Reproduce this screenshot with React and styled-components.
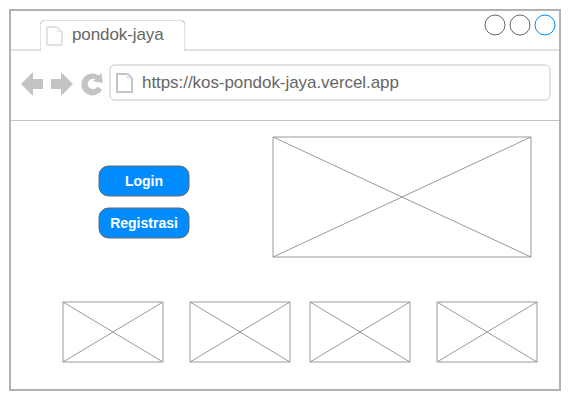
import React from "react";
import styled, { createGlobalStyle } from "styled-components";

const GlobalStyle = createGlobalStyle`
  * { box-sizing: border-box; }
  body {
    margin: 0;
    background: #fff;
    font-family: "Liberation Sans", Arial, Helvetica, sans-serif;
  }
`;

const Page = styled.div`
  width: 571px;
  height: 401px;
  padding: 9px;
  overflow: hidden;
`;

const BrowserWindow = styled.div`
  width: 552px;
  height: 382px;
  border: 2px solid #b2b2b2;
  display: flex;
  flex-direction: column;
`;

const TabStrip = styled.div`
  display: flex;
  height: 40px;
`;

const StripLine = styled.div`
  width: 30px;
  flex: none;
  border-bottom: 2px solid #e1e1e1;
`;

const outline = `
  content: "";
  position: absolute;
  inset: 0 1px 1px 0;
  border: 1px solid #c4c4c4;
  transform: translate(0.5px, 0.5px);
`;

const Tab = styled.div`
  position: relative;
  width: 147px;
  height: 32px;
  margin: 8px 0 0 -2px;
  padding: 7px 0 0 7px;
  display: flex;
  align-items: flex-start;

  &::before {
    ${outline}
    border-bottom: 0;
    border-radius: 6px 6px 0 0;
  }
`;

const Label = styled.span`
  font-size: 17px;
  line-height: 20px;
  white-space: nowrap;
  color: #666;
`;

const TabLabel = styled(Label)`
  margin: -1px 0 0 8px;
  letter-spacing: -0.1px;
`;

const Controls = styled.div`
  display: flex;
  justify-content: flex-end;
  gap: 3px;
  padding: 3px 3px 0 0;
  margin-left: -2px;
  flex: 1;
  border-bottom: 2px solid #e1e1e1;
`;

const Control = styled.svg`
  display: block;
  width: 22px;
  height: 22px;
  fill: #fff;
  stroke: ${(p) => p.$color};
`;

const Toolbar = styled.div`
  display: flex;
  height: 70px;
  padding: 13px 8px 0 9px;
  border-bottom: 1px solid #c4c4c4;
`;

const NavIcons = styled.svg`
  display: block;
  width: 84px;
  height: 26px;
  margin: 7px 5px 0 0;
  fill: #c4c4c4;
`;

const AddressBar = styled.div`
  position: relative;
  width: 442px;
  height: 37px;
  display: flex;
  padding: 9px 0 0 7px;

  &::before {
    ${outline}
    border-radius: 5px;
  }
`;

const AddressLabel = styled(Label)`
  margin-left: 8px;
  letter-spacing: -0.06px;
`;

const FileIcon = styled.svg`
  display: block;
  flex: none;
  width: 18px;
  height: 20px;
  fill: none;
`;

const Hero = styled.div`
  display: flex;
  padding: 15px 0 0 87px;
`;

const Actions = styled.div`
  display: flex;
  flex-direction: column;
  gap: 10px;
  padding-top: 29px;
  width: 174px;
`;

const Button = styled.button`
  position: relative;
  width: 92px;
  height: 32px;
  padding: 0;
  border: 0;
  background: none;
  font: bold 14px/32px "Liberation Sans", Arial, sans-serif;
  color: #fff;

  &::before {
    ${outline}
    border-color: #666;
    border-radius: 10px;
    background: #008cff;
  }
`;

const ButtonLabel = styled.span`
  position: relative;
`;

const Gallery = styled.div`
  display: grid;
  grid-template-columns: 127px 120px 127px 102px;
  padding: 43px 0 0 51px;
`;

const Picture = styled.svg`
  display: block;
  fill: none;
  stroke: #999;
`;

function Placeholder({ width, height }) {
  return (
    <Picture width={width + 2} height={height + 2}>
      <path d={`M1 1H${width + 1}V${height + 1}H1Z`} />
      <path d={`M1 1L${width + 1} ${height + 1}M${width + 1} 1L1 ${height + 1}`} />
    </Picture>
  );
}

function File({ strong }) {
  return (
    <FileIcon viewBox="0 0 18 20">
      <path d="M1 1H11.5L16 5.5V19H1Z" stroke="#c4c4c4" strokeWidth={strong ? 2 : 1} />
      <path d="M11.5 1V5.5H16" stroke="#e1e1e1" />
    </FileIcon>
  );
}

const buttons = ["Login", "Registrasi"];
const controls = ["#666", "#666", "#008cff"];

export default function App() {
  return (
    <Page>
      <GlobalStyle />
      <BrowserWindow>
        <TabStrip>
          <StripLine />
          <Tab>
            <File />
            <TabLabel>pondok-jaya</TabLabel>
          </Tab>
          <Controls>
            {controls.map((color, i) => (
              <Control key={i} $color={color}>
                <circle cx="11" cy="11" r="10" />
              </Control>
            ))}
          </Controls>
        </TabStrip>
        <Toolbar>
          <NavIcons viewBox="20 71 84 26">
            <path d="M21 84L33 72V79H43V89H33V96Z" />
            <path d="M73 84L61 72V79H51V89H61V96Z" />
            <path d="M98.7 75.6L101.3 73L103 83L92.7 81.3L95.3 79.4A5.2 5.2 0 1 0 97.5 86.5L102 89.5A10.9 10.9 0 1 1 98.7 75.6Z" />
          </NavIcons>
          <AddressBar>
            <File strong />
            <AddressLabel>https://kos-pondok-jaya.vercel.app</AddressLabel>
          </AddressBar>
        </Toolbar>
        <Hero>
          <Actions>
            {buttons.map((text) => (
              <Button key={text}>
                <ButtonLabel>{text}</ButtonLabel>
              </Button>
            ))}
          </Actions>
          <Placeholder width={258} height={120} />
        </Hero>
        <Gallery>
          <Placeholder width={100} height={60} />
          <Placeholder width={100} height={60} />
          <Placeholder width={100} height={60} />
          <Placeholder width={100} height={60} />
        </Gallery>
      </BrowserWindow>
    </Page>
  );
}
